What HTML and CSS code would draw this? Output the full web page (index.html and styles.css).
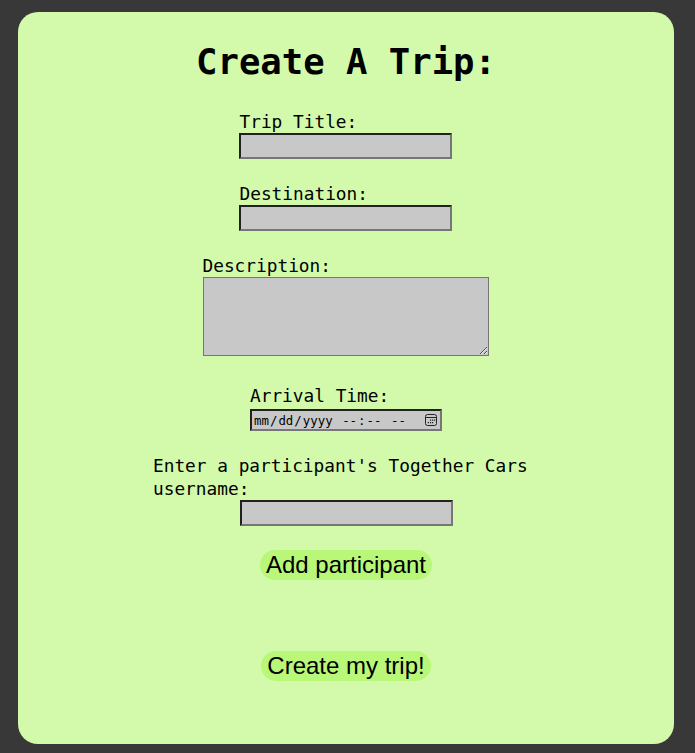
FILE: index.html
```html
<!DOCTYPE html>
<html lang="en">
<head>
<meta charset="utf-8">
<title>Create A Trip</title>
<link rel="stylesheet" href="styles.css">
</head>
<body>
<form class="card">
  <h1 class="title">Create A Trip:</h1>
  <div class="field field-text"><label for="title">Trip Title:</label><input class="text" id="title" type="text"></div>
  <div class="field field-text"><label for="destination">Destination:</label><input class="text" id="destination" type="text"></div>
  <div class="field field-area"><label for="description">Description:</label><textarea class="area" id="description"></textarea></div>
  <div class="field field-date">
    <label id="arrival">Arrival Time:</label>
    <div class="date" role="group" aria-labelledby="arrival">
      <span class="part">mm</span>/<span class="part">dd</span>/<span class="part">yyyy</span><span class="part hour">--</span>:<span class="part">--</span><span class="part period">--</span>
      <svg class="calendar" width="14" height="14" viewBox="0 0 14 14" fill="none" stroke="#222" stroke-width="1">
        <rect x="1.5" y="1.5" width="11" height="11" rx="2"/>
        <path d="M1.5 4.5h11"/>
        <path stroke-width="1.3" d="M6 7.2h1.2M8 7.2h1.2M10 7.2h1.2M3.8 9.7h1.2M6 9.7h1.2M8 9.7h1.2"/>
      </svg>
    </div>
  </div>
  <div class="field field-user"><label for="user">Enter a participant's Together Cars username:</label><input class="text" id="user" type="text"></div>
  <button class="button add" type="button">Add participant</button>
  <button class="button create" type="button">Create my trip!</button>
</form>
</body>
</html>
```
FILE: styles.css
```css
* { box-sizing: border-box; }
body { margin: 0; padding: 12px 21px 9px 18px; background: #383838; }
.card {
  height: 732px;
  padding-top: 27px;
  border-radius: 20px;
  background: #d2faaa;
  color: #000;
  display: flex;
  flex-direction: column;
  align-items: center;
  font: 17.8px/23px Consolas, "DejaVu Sans Mono", monospace;
}
.title { margin: 0 0 25px; font-size: 35.6px; line-height: 46px; white-space: nowrap; }
.field { display: flex; flex-direction: column; }
.field-text { width: 213px; margin: 0 1px 23px 0; }
.field-text label { padding-left: 0.5px; }
.field-area { width: 286px; margin-bottom: 28px; }
.field-area label { margin-left: -0.5px; }
.field-date { width: 192px; margin-bottom: 23px; }
.field-date label { margin-bottom: 2px; }
.field-user { width: 386px; margin-bottom: 24px; }
.field-user .text { align-self: center; margin-left: 1px; }
.text, .area, .date { margin: 0; background: #c8c8c8; border-radius: 0; }
.text { width: 213px; height: 26px; border: 2px inset #767676; }
.area { width: 286px; height: 79px; border: 1px solid #767676; resize: both; }
.date {
  display: flex;
  align-items: center;
  width: 192px;
  height: 22px;
  padding: 2px 1px 0;
  border: 2px solid;
  border-color: #212121 #767676 #767676 #212121;
  font: 12.4px/16px Consolas, "DejaVu Sans Mono", monospace;
}
.part { padding: 0 1px; }
.hour { margin-left: 7.5px; }
.period { margin-left: 7.5px; }
.calendar { margin: -2px 1px 0 auto; }
.button {
  height: 30px;
  padding: 0 6px;
  border: 0;
  border-radius: 15px;
  background: #b9f778;
  color: #000;
  font: 24px/30px "Liberation Sans", Arial, sans-serif;
  white-space: nowrap;
}
.create { margin-top: 71px; }
```
